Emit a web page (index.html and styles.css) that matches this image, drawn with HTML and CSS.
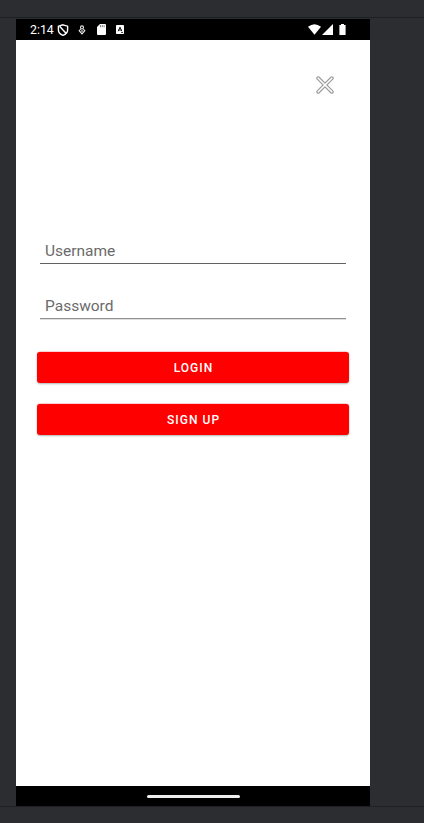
FILE: index.html
```html
<!DOCTYPE html>
<html lang="en">
<head>
<meta charset="utf-8">
<title>Login</title>
<link rel="stylesheet" href="styles.css">
</head>
<body>
<div class="toolbar"></div>
<main class="phone">
  <header class="status">
    <span class="time">2:14</span>
    <svg class="shield" width="12" height="12" viewBox="0 0 12 12"><path d="M6 .8 10.6 2.2V6C10.6 8.4 8.8 10.3 6 11.3 3.2 10.3 1.4 8.4 1.4 6V2.2ZM2.8 2.6 9 9.3" fill="none" stroke="#fff" stroke-width="1.4"/></svg>
    <svg class="debug" width="8" height="10" viewBox="0 0 8 10"><g fill="none" stroke="#e8e8e8" stroke-width="1.1"><circle cx="4" cy="2.4" r="1.5"/><path d="M2.7 4.2 1.2 5.7 4 8.9 6.8 5.7 5.3 4.2M4 5v2"/></g></svg>
    <svg class="sd" width="9" height="11" viewBox="0 0 9 11"><path d="M3 0H8Q9 0 9 1V10Q9 11 8 11H1Q0 11 0 10V3Z" fill="#fff"/><path d="M3.5 1.2v2M5.3 1.2v2M7.1 1.2v2" stroke="#555" stroke-width=".8"/></svg>
    <svg class="ime" width="8" height="9" viewBox="0 0 8 9"><rect width="8" height="9" rx=".8" fill="#fff"/><path d="M2.2 6.2 4 2.1 5.8 6.2M2.8 5h2.4M5.3 7.5h1.5" fill="none" stroke="#111"/></svg>
    <svg class="wifi" width="13" height="11" viewBox="0 0 13 11"><path d="M0 2.8Q6.5-2.2 13 2.8L6.5 10.7Z" fill="#fff"/></svg>
    <svg class="signal" width="11" height="11" viewBox="0 0 11 11"><path d="M11 0V11H0Z" fill="#fff"/></svg>
    <svg class="battery" width="7" height="11" viewBox="0 0 7 11"><path d="M2 0h3v1H6.6V11H.4V1H2Z" fill="#fff"/></svg>
  </header>
  <form class="screen">
    <svg class="close" width="18" height="18" viewBox="0 0 18 18"><g fill="none" stroke-linecap="round"><path d="M2.2 2.2 15.8 15.8M15.8 2.2 2.2 15.8" stroke="#999" stroke-width="3.8"/><path d="M2.2 2.2 15.8 15.8M15.8 2.2 2.2 15.8" stroke="#fff" stroke-width="1.6"/></g></svg>
    <div class="field username">Username</div>
    <div class="field password">Password</div>
    <button type="button" class="login">LOGIN</button>
    <button type="button" class="signup">SIGN UP</button>
  </form>
  <footer class="nav"><span class="handle"></span></footer>
</main>
<div class="bottom"></div>
</body>
</html>
```
FILE: styles.css
```css
* { box-sizing: border-box; }
body { margin: 0; height: 823px; overflow: hidden; background: #2b2d30; font-family: Roboto, sans-serif; }
.toolbar { height: 18px; margin-bottom: 1px; border-bottom: 1px solid #1e1f22; }
.phone { width: 354px; height: 787px; margin-left: 16px; background: #fff; display: flex; flex-direction: column; }
.status { height: 21px; background: #000; color: #fff; display: flex; align-items: center; padding-left: 14px; }
.status svg { flex: none; }
.time { width: 27px; font-size: 12.3px; line-height: 20px; white-space: nowrap; }
.debug { margin-left: 9px; }
.sd { margin-left: 11px; }
.ime { margin-left: 10px; }
.wifi { margin-left: 184px; margin-bottom: 1px; }
.signal { margin-left: 1px; margin-bottom: 1px; }
.battery { margin-left: 6px; margin-bottom: 1px; }
.screen { flex: 1; display: flex; flex-direction: column; padding: 0 21px; }
.close { margin: 36px 15px 0 auto; flex: none; }
.field { height: 29px; margin: 0 3px; padding-left: 5px; font-size: 15.5px; line-height: 32px; color: #6a6a6a; border-bottom: 1px solid #626262; }
.username { margin-top: 141px; }
.password { height: 30px; margin-top: 25px; line-height: 34px; border-bottom-color: #929292; box-shadow: 0 1px #dedede; }
button { height: 31px; border: 0; border-radius: 3px; padding: 2px 0 0 1px; background: #f00; color: #fff; font: 500 12px/29px Roboto, sans-serif; letter-spacing: 1.05px; box-shadow: 0 -.5px 0 rgba(255, 0, 0, .35), 0 1px 2px rgba(0, 0, 0, .3); flex: none; }
.login { margin-top: 33px; }
.signup { margin-top: 21px; }
.nav { height: 20px; background: #000; display: flex; justify-content: center; align-items: center; }
.handle { width: 93px; height: 3.5px; margin-top: 1px; border-radius: 2px; background: #eee; }
.bottom { height: 17px; border-top: 1px solid #1e1f22; }
```
